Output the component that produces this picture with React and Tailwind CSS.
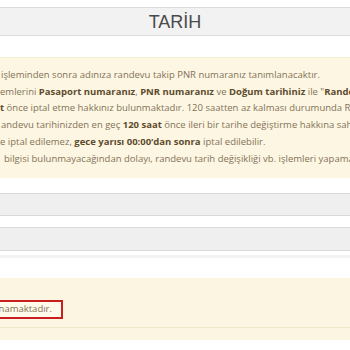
import React from 'react'

const B = ({ children }) => <b className="font-bold text-[#5e4b2c]">{children}</b>

const LINES = [
  { ml: 'ml-[1px]', body: <>işleminden sonra adınıza randevu takip PNR numaranız tanımlanacaktır.</> },
  { ml: 'ml-[0px]', body: <>emlerini <B>Pasaport numaranız</B>, <B>PNR numaranız</B> ve <B>Doğum tarihiniz</B> ile "<B>Randevu Sorgulama</B>" ekranından kontrol edebilirsiniz.</> },
  { ml: 'ml-[0px]', body: <><B>t</B> önce iptal etme hakkınız bulunmaktadır. 120 saatten az kalması durumunda Randevu iptal edilemez.</> },
  { ml: 'ml-[1px]', body: <>andevu tarihinizden en geç <B>120 saat</B> önce ileri bir tarihe değiştirme hakkına sahipsiniz.</> },
  { ml: 'ml-[0px]', body: <>e iptal edilemez, <B>gece yarısı 00:00’dan sonra</B> iptal edilebilir.</> },
  { ml: 'ml-[4px]', body: <>bilgisi bulunmayacağından dolayı, randevu tarih değişikliği vb. işlemleri yapamazsınız.</> },
]

export default function App() {
  return (
    <div className="w-[350px] h-[350px] overflow-hidden bg-white font-['Open_Sans',sans-serif]">
      {/* Header */}
      <div className="mt-[7px] h-[29px] bg-[#f2f2f2] border-y border-[#dcdcdc] flex items-center justify-center">
        <h2 className="font-['Liberation_Sans',Arial,sans-serif] text-[18px] text-[#4a4a4a] leading-none">TARİH</h2>
      </div>

      {/* Info box */}
      <div className="mt-[21px] h-[121px] bg-[#fcf6e3] border-t border-[#f5ecd2] pt-[9px] text-[9.5px] leading-[16.7px] text-[#857257] overflow-hidden">
        {LINES.map((l, i) => (
          <p key={i} className={`whitespace-nowrap ${l.ml}`}>{l.body}</p>
        ))}
      </div>

      {/* Form rows */}
      <div className="mt-[15px] h-[23px] bg-[#efefef] border-y border-[#dadada]" />
      <div className="mt-[11px] h-[24px] bg-[#efefef] border-y border-[#dadada]" />
      <div className="mt-[4px] h-[3px] bg-[#f3f3f3]" />

      {/* Bottom notice */}
      <div className="mt-[20px] h-[62px] bg-[#fbf5e2] pt-[22px]">
        <div className="w-[63px] h-[19px] border-2 border-l-0 border-[#c9201f] bg-[#fffaea] flex items-center justify-end pr-[9px]">
          <span className="whitespace-nowrap text-[9.5px] text-[#857257]">namaktadır.</span>
        </div>
        <div className="mt-[8px] h-px bg-[#f0e6c9]" />
      </div>
    </div>
  )
}
